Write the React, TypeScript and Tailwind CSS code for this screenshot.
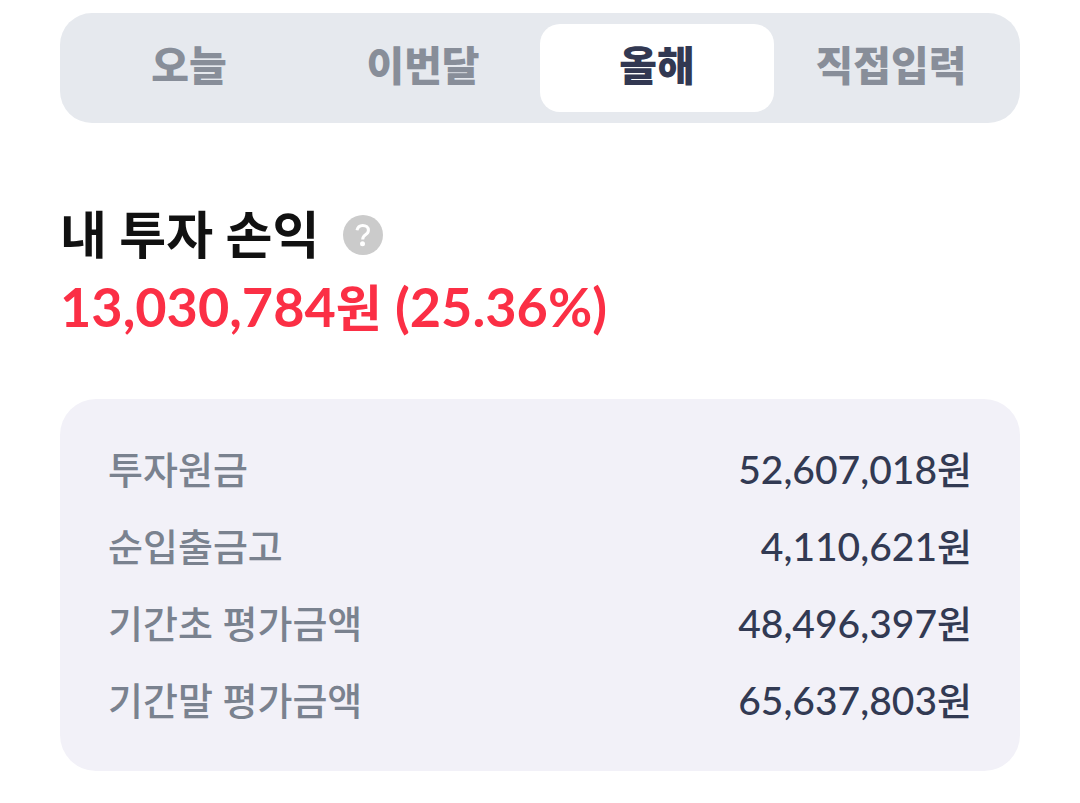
import { useState } from 'react';

const periods = ['오늘', '이번달', '올해', '직접입력'];

const rows = [
  { label: '투자원금', amount: '52,607,018' },
  { label: '순입출금고', amount: '4,110,621' },
  { label: '기간초 평가금액', amount: '48,496,397' },
  { label: '기간말 평가금액', amount: '65,637,803' },
];

const HelpIcon = () => (
  <svg viewBox="0 0 40 40" className="size-10" aria-hidden="true">
    <circle cx="20" cy="20" r="20" fill="#cbcbcb" />
    <path
      d="M14 15.2c.6-3.1 2.8-4.8 5.7-4.8 3.3 0 5.7 1.9 5.7 4.8 0 2.2-1 3.3-2.9 4.6-1.9 1.3-2.8 2.2-2.8 4.6"
      fill="none"
      stroke="#fff"
      strokeWidth="3"
    />
    <circle cx="19.5" cy="28.7" r="2.5" fill="#fff" />
  </svg>
);

export default function App() {
  const [period, setPeriod] = useState('올해');

  return (
    <main className="bg-white px-[60px] pt-[13px] pb-8 font-['Lato','Noto_Sans_CJK_KR',sans-serif]">
      <nav className="grid grid-cols-4 rounded-[32px] bg-[#e6e9ee] px-3 py-[11px]">
        {periods.map((name) => (
          <button
            key={name}
            type="button"
            onClick={() => setPeriod(name)}
            className={`h-[88px] rounded-[20px] pb-1 text-[41px] font-black ${
              period === name ? 'bg-white text-[#323852]' : 'text-[#888e99]'
            }`}
          >
            {name}
          </button>
        ))}
      </nav>

      <section className="mt-[76px]">
        <div className="flex items-center gap-6">
          <h1 className="text-[51px] leading-[72px] font-bold text-[#111]">내 투자 손익</h1>
          <button type="button" aria-label="도움말">
            <HelpIcon />
          </button>
        </div>
        <p className="text-[54px] leading-[72px] font-bold text-[#fb2f45]">
          13,030,784<span className="text-[50px]">원</span> (25.36%)
        </p>
      </section>

      <dl className="mt-[55px] rounded-[36px] bg-[#f2f1f8] px-12 py-8">
        {rows.map((row) => (
          <div key={row.label} className="flex h-[77px] items-center justify-between">
            <dt className="text-[38px] font-medium text-[#7a828f]">{row.label}</dt>
            <dd className="text-[39px] font-medium text-[#323a53]">
              {row.amount}
              <span className="text-[38px]">원</span>
            </dd>
          </div>
        ))}
      </dl>
    </main>
  );
}
